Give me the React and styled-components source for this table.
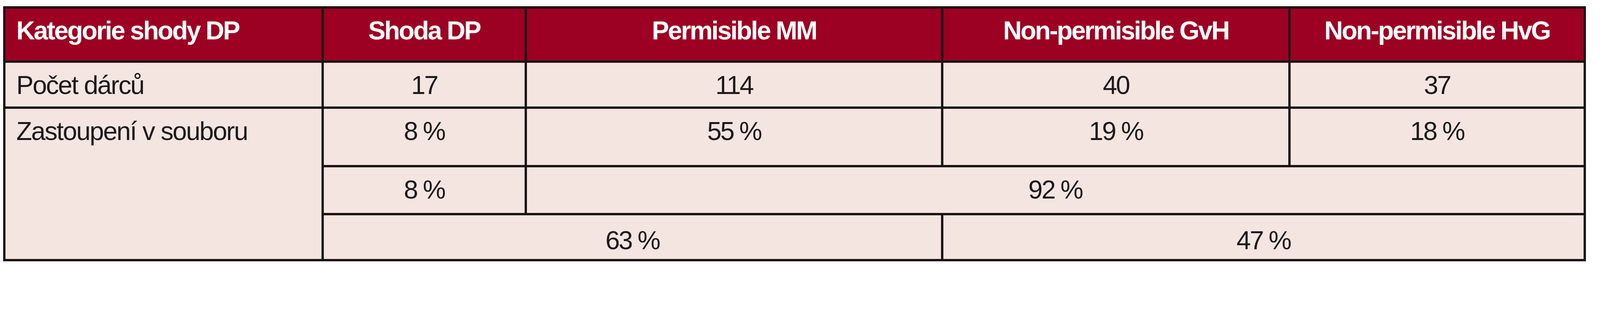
import React from 'react'
import styled, { createGlobalStyle } from 'styled-components'

// the reference is 4461px wide; sizes are given in those pixels and scaled to the viewport
const u = n => `${((n * 100) / 4461).toFixed(4)}vw`

const GlobalStyle = createGlobalStyle`
  html, body {
    margin: 0;
    padding: 0;
    background: #ffffff;
    overflow: hidden;
  }
  body {
    font-family: 'Liberation Sans', Arial, sans-serif;
  }
`

const Page = styled.div`
  width: 100vw;
  padding: ${u(17)} 0 0 ${u(9)};
  box-sizing: border-box;
`

const Table = styled.table`
  border-collapse: collapse;
  table-layout: fixed;
  width: ${u(4406)};
  font-family: 'Liberation Sans', Arial, sans-serif;
  font-size: ${u(72)};
  line-height: ${u(72)};
  border: ${u(7)} solid #1a1512;
  border-top-color: #200709;
`

const Col = styled.col`
  width: ${props => u(props.$w)};
`

const HeadRow = styled.tr`
  height: ${u(152)};
  background: #9c0022;
`

const Row = styled.tr`
  height: ${props => u(props.$h)};
  background: #f5e5e1;
`

const Th = styled.th`
  border: ${u(7)} solid #1a1512;
  border-top-color: #200709;
  color: #ffffff;
  font-weight: 700;
  letter-spacing: ${u(-3.5)};
  text-align: ${props => (props.$left ? 'left' : 'center')};
  vertical-align: top;
  padding: ${u(26)} 0 0 ${props => (props.$left ? u(30) : '0')};
  white-space: nowrap;
`

const Td = styled.td`
  border: ${u(7)} solid #1a1512;
  color: #1b1a1a;
  font-weight: 400;
  letter-spacing: ${props => u(props.$left ? -2.6 : -3.5)};
  text-align: ${props => (props.$left ? 'left' : 'center')};
  vertical-align: top;
  padding: ${props => u(props.$pt || 26)} 0 0 ${props => (props.$left ? u(30) : '0')};
  white-space: nowrap;
`

const columns = [887, 567, 1161, 968, 823]

const headers = ['Kategorie shody DP', 'Shoda DP', 'Permisible MM', 'Non-permisible GvH', 'Non-permisible HvG']

export default function App() {
  return (
    <>
      <GlobalStyle />
      <Page>
        <Table>
          <colgroup>
            {columns.map((w, i) => (
              <Col key={i} $w={w} />
            ))}
          </colgroup>
          <thead>
            <HeadRow>
              {headers.map((h, i) => (
                <Th key={h} $left={i === 0}>
                  {h}
                </Th>
              ))}
            </HeadRow>
          </thead>
          <tbody>
            <Row $h={128}>
              <Td $left>Počet dárců</Td>
              <Td>17</Td>
              <Td>114</Td>
              <Td>40</Td>
              <Td>37</Td>
            </Row>
            <Row $h={164}>
              <Td $left rowSpan={3}>
                Zastoupení v souboru
              </Td>
              <Td>8 %</Td>
              <Td>55 %</Td>
              <Td>19 %</Td>
              <Td>18 %</Td>
            </Row>
            <Row $h={134}>
              <Td>8 %</Td>
              <Td colSpan={3}>92 %</Td>
            </Row>
            <Row $h={128}>
              <Td colSpan={2} $pt={33}>
                63 %
              </Td>
              <Td colSpan={2} $pt={33}>
                47 %
              </Td>
            </Row>
          </tbody>
        </Table>
      </Page>
    </>
  )
}
